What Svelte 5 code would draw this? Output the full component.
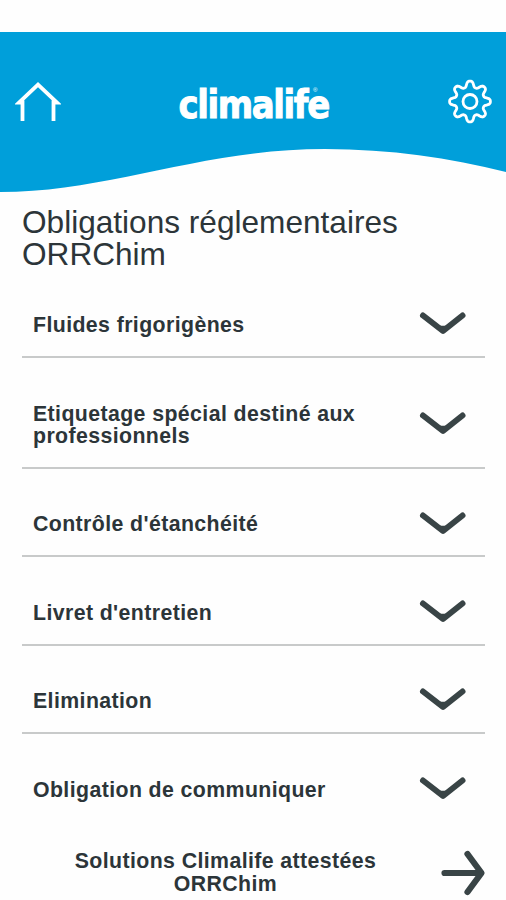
<script lang="ts">
  const sections = [
    'Fluides frigorigènes',
    'Etiquetage spécial destiné aux professionnels',
    "Contrôle d'étanchéité",
    "Livret d'entretien",
    'Elimination',
    'Obligation de communiquer',
  ]

  // gear outline: eight rounded teeth around the centre
  function gearPath(mid: number, depth: number) {
    const pts: string[] = []
    for (let i = 0; i < 160; i++) {
      const a = (i / 160) * Math.PI * 2
      const r = mid + depth * Math.tanh(1.4 * Math.cos(8 * a)) / Math.tanh(1.4)
      pts.push(`${(r * Math.sin(a)).toFixed(2)} ${(-r * Math.cos(a)).toFixed(2)}`)
    }
    return `M${pts.join('L')}Z`
  }

  const gear = gearPath(17.5, 2.9)
</script>

<div class="screen">
  <header class="header">
    <svg class="wave" width="506" height="161" viewBox="0 0 506 161" aria-hidden="true">
      <path d="M0 0H506V140C450 126 390 117 325 117C200 117 110 160 0 160Z" fill="#009fda"/>
    </svg>
    <button class="icon-btn" aria-label="Accueil">
      <svg width="46" height="42" viewBox="0 0 46 42" fill="none">
        <path d="M7.5 41V22.5H4L23 4.5L42 22.5H38.5V41" stroke="#fff" stroke-width="3.8"/>
      </svg>
    </button>
    <svg class="logo" width="152" height="38" viewBox="0 0 152 38">
      <text class="logo-text" transform="scale(0.86 1)" x="0.5" y="33.5">climalife</text>
      <text class="logo-mark" x="135" y="8">®</text>
    </svg>
    <button class="icon-btn" aria-label="Réglages">
      <svg width="46" height="46" viewBox="-23 -23.5 46 46" fill="none" stroke="#fff" stroke-width="2.8">
        <path d={gear} stroke-linejoin="round"/>
        <circle r="7"/>
      </svg>
    </button>
  </header>

  <main>
    <h1>Obligations réglementaires ORRChim</h1>

    <ul class="list">
      {#each sections as section}
        <li class="item">
          <span class="label">{section}</span>
          <svg class="chevron" width="48" height="24" viewBox="0 0 48 24">
            <path d="M12 8L19.5 13.8H28.5L36 8L24 20Z" fill="#394446"/>
            <path d="M4 3.5L24 19L43.5 3.5" fill="none" stroke="#394446" stroke-width="6" stroke-linecap="round" stroke-linejoin="round"/>
          </svg>
        </li>
      {/each}
    </ul>

    <div class="solutions">
      <span class="solutions-label">Solutions Climalife attestées ORRChim</span>
      <svg width="46" height="48" viewBox="0 0 46 48">
        <path d="M4.5 24H40M27.5 5L41.5 24L27.5 43" fill="none" stroke="#394446" stroke-width="6.2" stroke-linecap="round" stroke-linejoin="round"/>
      </svg>
    </div>
  </main>
</div>

<style>
  :global(body) {
    margin: 0;
    background: #fefefe;
  }

  .screen {
    width: 506px;
    height: 900px;
    padding-top: 32px;
    box-sizing: border-box;
    overflow: hidden;
    font-family: "Liberation Sans", Arial, sans-serif;
    color: #2c3539;
  }

  .header {
    position: relative;
    height: 161px;
    box-sizing: border-box;
    padding: 46px 13px 0 15px;
    display: flex;
    justify-content: space-between;
    align-items: flex-start;
  }

  .wave {
    position: absolute;
    top: 0;
    left: 0;
  }

  .icon-btn {
    position: relative;
    height: 46px;
    padding: 0;
    border: none;
    background: none;
    display: flex;
    align-items: center;
    cursor: pointer;
  }

  .logo {
    position: relative;
    margin-top: 6px;
    overflow: visible;
    fill: #fff;
  }

  .logo-text {
    font-family: "DejaVu Sans", sans-serif;
    font-size: 39.5px;
    font-weight: 700;
    letter-spacing: -1.6px;
    stroke: #fff;
    stroke-width: 1;
  }

  .logo-mark {
    font-size: 6px;
  }

  h1 {
    margin: 14px 22px 0;
    font-size: 31.6px;
    font-weight: 400;
    line-height: 31.6px;
  }

  .list {
    list-style: none;
    margin: 0 21px 0 22px;
    padding: 0;
  }

  .item {
    display: flex;
    align-items: center;
    justify-content: space-between;
    padding: 44.5px 18px 19.7px 11px;
    border-bottom: 2px solid #c8caca;
  }

  .item:first-child {
    padding-top: 44px;
    padding-bottom: 20px;
  }

  .item:last-child {
    border-bottom: none;
  }

  .label,
  .solutions-label {
    font-size: 21.3px;
    font-weight: 700;
    line-height: 22.2px;
    letter-spacing: 0.4px;
  }

  .label {
    max-width: 340px;
  }

  .chevron {
    flex-shrink: 0;
    margin: -3px 0 -1px;
  }

  .solutions {
    display: flex;
    align-items: center;
    justify-content: space-between;
    margin: 28px 20px 0 60px;
  }

  .solutions-label {
    width: 331px;
    text-align: center;
  }
</style>
